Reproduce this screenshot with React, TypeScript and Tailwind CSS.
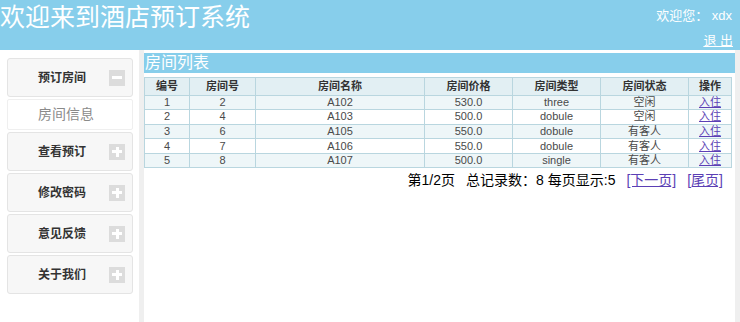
const rooms = [
  { id: 1, no: 2, name: "A102", price: "530.0", type: "three", status: "空闲" },
  { id: 2, no: 4, name: "A103", price: "500.0", type: "dobule", status: "空闲" },
  { id: 3, no: 6, name: "A105", price: "550.0", type: "dobule", status: "有客人" },
  { id: 4, no: 7, name: "A106", price: "550.0", type: "dobule", status: "有客人" },
  { id: 5, no: 8, name: "A107", price: "500.0", type: "single", status: "有客人" },
];

const menus = ["查看预订", "修改密码", "意见反馈", "关于我们"];

function SignIcon({ plus }: { plus?: boolean }) {
  return (
    <span className="relative w-[16px] h-[16px] bg-[#dcdcdc] flex items-center justify-center">
      <span className="absolute w-[10px] h-[3px] bg-white" />
      {plus && <span className="absolute w-[3px] h-[10px] bg-white" />}
    </span>
  );
}

function MenuBox({ label, plus }: { label: string; plus?: boolean }) {
  return (
    <div className="h-[39px] border border-[#e4e4e4] rounded-[3px] bg-[#f7f7f7] flex items-center justify-between pl-[30px] pr-[7px]">
      <span className="text-[12px] font-bold text-[#333]">{label}</span>
      <SignIcon plus={plus} />
    </div>
  );
}

export default function App() {
  const th = "border border-[#b9d6df] font-bold text-[11px] text-[#333] text-center";
  const td = "border border-[#b9d6df] text-[11px] text-[#4a4a4a] text-center leading-[13px]";

  return (
    <div className="w-[740px] h-[322px] bg-white flex flex-col overflow-hidden" style={{ fontFamily: '"Liberation Sans", "Noto Sans CJK SC", sans-serif' }}>
      {/* 顶部 */}
      <div className="h-[50px] bg-[#87ceeb] flex justify-between shrink-0">
        <h1 className="text-[25px] leading-[34px] text-white font-normal">欢迎来到酒店预订系统</h1>
        <div className="flex flex-col items-end text-[13px] text-white pr-[8px]">
          <span className="mt-[7px] leading-[18px]">欢迎您： xdx</span>
          <a href="#" className="mt-[7px] leading-[18px] underline mr-[-1px]">退 出</a>
        </div>
      </div>

      <div className="flex flex-1">
        {/* 左侧菜单 */}
        <div className="w-[139px] pt-[8px] pl-[7px] pr-[6px] flex flex-col gap-[2px] shrink-0">
          <MenuBox label="预订房间" />
          <div className="h-[31px] border border-[#efefef] rounded-[2px] bg-white flex items-center pl-[30px]">
            <span className="text-[14px] text-[#8a8a8a]">房间信息</span>
          </div>
          {menus.map((m) => (
            <MenuBox key={m} label={m} plus />
          ))}
        </div>
        <div className="w-[5px] bg-[#efefef] shrink-0" />

        {/* 主区域 */}
        <div className="flex-1 pt-[3px]">
          <div className="h-[20px] bg-[#87ceeb] text-white text-[16px] leading-[20px] pl-[1px]">房间列表</div>
          <table className="mt-[4px] w-[587px] border-collapse table-fixed">
            <colgroup>
              <col className="w-[45px]" />
              <col className="w-[66px]" />
              <col className="w-[169px]" />
              <col className="w-[88px]" />
              <col className="w-[88px]" />
              <col className="w-[88px]" />
              <col className="w-[43px]" />
            </colgroup>
            <thead>
              <tr className="h-[15px] bg-[#e2eff3]">
                <th className={th}>编号</th>
                <th className={th}>房间号</th>
                <th className={th}>房间名称</th>
                <th className={th}>房间价格</th>
                <th className={th}>房间类型</th>
                <th className={th}>房间状态</th>
                <th className={th}>操作</th>
              </tr>
            </thead>
            <tbody>
              {rooms.map((r, i) => (
                <tr key={r.id} className={`h-[14.6px] ${i % 2 === 0 ? "bg-[#eef6f8]" : "bg-white"}`}>
                  <td className={td}>{r.id}</td>
                  <td className={td}>{r.no}</td>
                  <td className={td}>{r.name}</td>
                  <td className={td}>{r.price}</td>
                  <td className={td}>{r.type}</td>
                  <td className={td}>{r.status}</td>
                  <td className={td}>
                    <a href="#" className="underline text-[#5b3fb5]">入住</a>
                  </td>
                </tr>
              ))}
            </tbody>
          </table>
          <div className="flex justify-end pr-[12px] mt-[2px] text-[14px] leading-[20px] text-black">
            <span>第1/2页</span>
            <span className="ml-[11px]">总记录数：8</span>
            <span className="ml-[4px]">每页显示:5</span>
            <a href="#" className="ml-[11px] underline text-[#5b3fb5]">[下一页]</a>
            <a href="#" className="ml-[11px] underline text-[#5b3fb5]">[尾页]</a>
          </div>
        </div>
        <div className="w-[5px] bg-[#efefef] shrink-0" />
      </div>
    </div>
  );
}
